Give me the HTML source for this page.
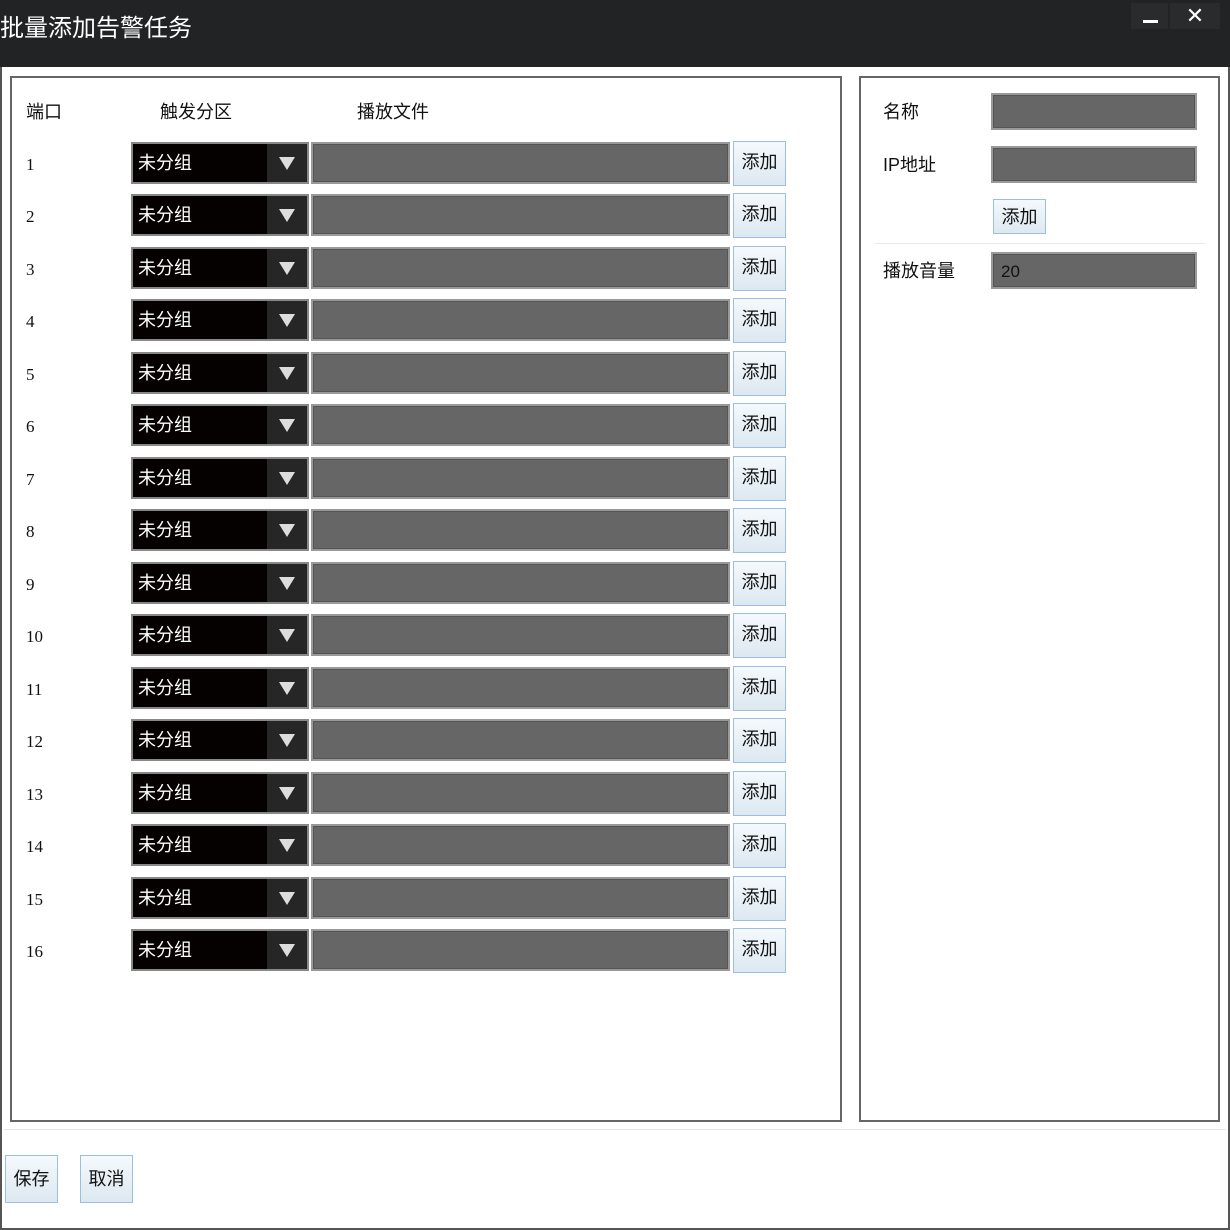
<!DOCTYPE html>
<html><head><meta charset="utf-8"><style>
*{margin:0;padding:0;box-sizing:border-box}
body{width:1230px;height:1230px;background:#fff;position:relative;overflow:hidden;font-family:"Liberation Sans","Noto Sans CJK SC",sans-serif;color:#111}
.abs{position:absolute}
.title{left:0;top:0;width:1230px;height:67px;background:#222325;color:#fff;font-size:24px;line-height:58px;padding-left:0}
.frame{left:0;top:67px;width:1230px;height:1163px;border:2px solid #555;border-top:none}
.panel{border:2px solid #666}
.lbl{font-size:18px;line-height:20px}
.num{font-family:"Liberation Serif",serif;font-size:17px}
.combo{width:178px;height:42px;background:#050101;border:2px solid #888;color:#fff;font-size:18px;line-height:39px;padding-left:5px}
.combo .arr{position:absolute;right:0;top:0;width:40px;height:38px;background:#262626}
.combo .arr:after{content:"";position:absolute;left:12px;top:13px;border-left:8px solid transparent;border-right:8px solid transparent;border-top:13px solid #ddd}
.field{background:#666;border:2px solid #999;box-shadow:inset 0 0 0 1px #555}
.btn{border:1px solid #9bbfe0;background:linear-gradient(#f4f9fd,#dde8f0);font-size:18px;text-align:center}
</style></head><body>
<div class="abs title">批量添加告警任务</div>
<div class="abs" style="left:1131px;top:3px;width:37px;height:26px;background:#2a2b2d"><div class="abs" style="left:12px;top:17px;width:15px;height:3px;background:#fff"></div></div>
<div class="abs" style="left:1170px;top:3px;width:50px;height:26px;background:#2a2b2d;color:#fff;font-size:22px;text-align:center;line-height:26px">✕</div>
<div class="abs frame"></div>
<div class="abs panel" style="left:10px;top:76px;width:832px;height:1046px"></div>
<div class="abs panel" style="left:859px;top:76px;width:361px;height:1046px"></div>
<div class="abs" style="left:4px;top:1129px;width:1222px;height:1px;background:#e6e6e6"></div>
<div class="abs lbl" style="left:26px;top:102px">端口</div>
<div class="abs lbl" style="left:160px;top:102px">触发分区</div>
<div class="abs lbl" style="left:357px;top:102px">播放文件</div>
<div id="rows"></div>
<div class="abs lbl" style="left:883px;top:102px">名称</div>
<div class="abs field" style="left:991px;top:93px;width:206px;height:37px"></div>
<div class="abs lbl" style="left:883px;top:155px">IP地址</div>
<div class="abs field" style="left:991px;top:146px;width:206px;height:37px"></div>
<div class="abs btn" style="left:993px;top:199px;width:53px;height:35px;line-height:34px">添加</div>
<div class="abs" style="left:875px;top:243px;width:330px;height:1px;background:#e8e8e8"></div>
<div class="abs lbl" style="left:883px;top:261px">播放音量</div>
<div class="abs field" style="left:991px;top:252px;width:206px;height:37px;color:#111;font-size:17px;line-height:35px;padding-left:8px">20</div>
<div class="abs btn" style="left:5px;top:1155px;width:53px;height:48px;line-height:47px">保存</div>
<div class="abs btn" style="left:80px;top:1155px;width:53px;height:48px;line-height:47px">取消</div>
<script>
var h='';for(var i=0;i<16;i++){var c=163+i*52.47;var t=c-21;
h+='<div class="abs lbl num" style="left:26px;top:'+(c-8)+'px">'+(i+1)+'</div>';
h+='<div class="abs combo" style="left:131px;top:'+t+'px">未分组<div class="arr"></div></div>';
h+='<div class="abs field" style="left:311px;top:'+t+'px;width:419px;height:42px"></div>';
h+='<div class="abs btn" style="left:733px;top:'+(t-1)+'px;width:53px;height:45px;line-height:41px">添加</div>';}
document.getElementById('rows').innerHTML=h;
</script>
</body></html>
